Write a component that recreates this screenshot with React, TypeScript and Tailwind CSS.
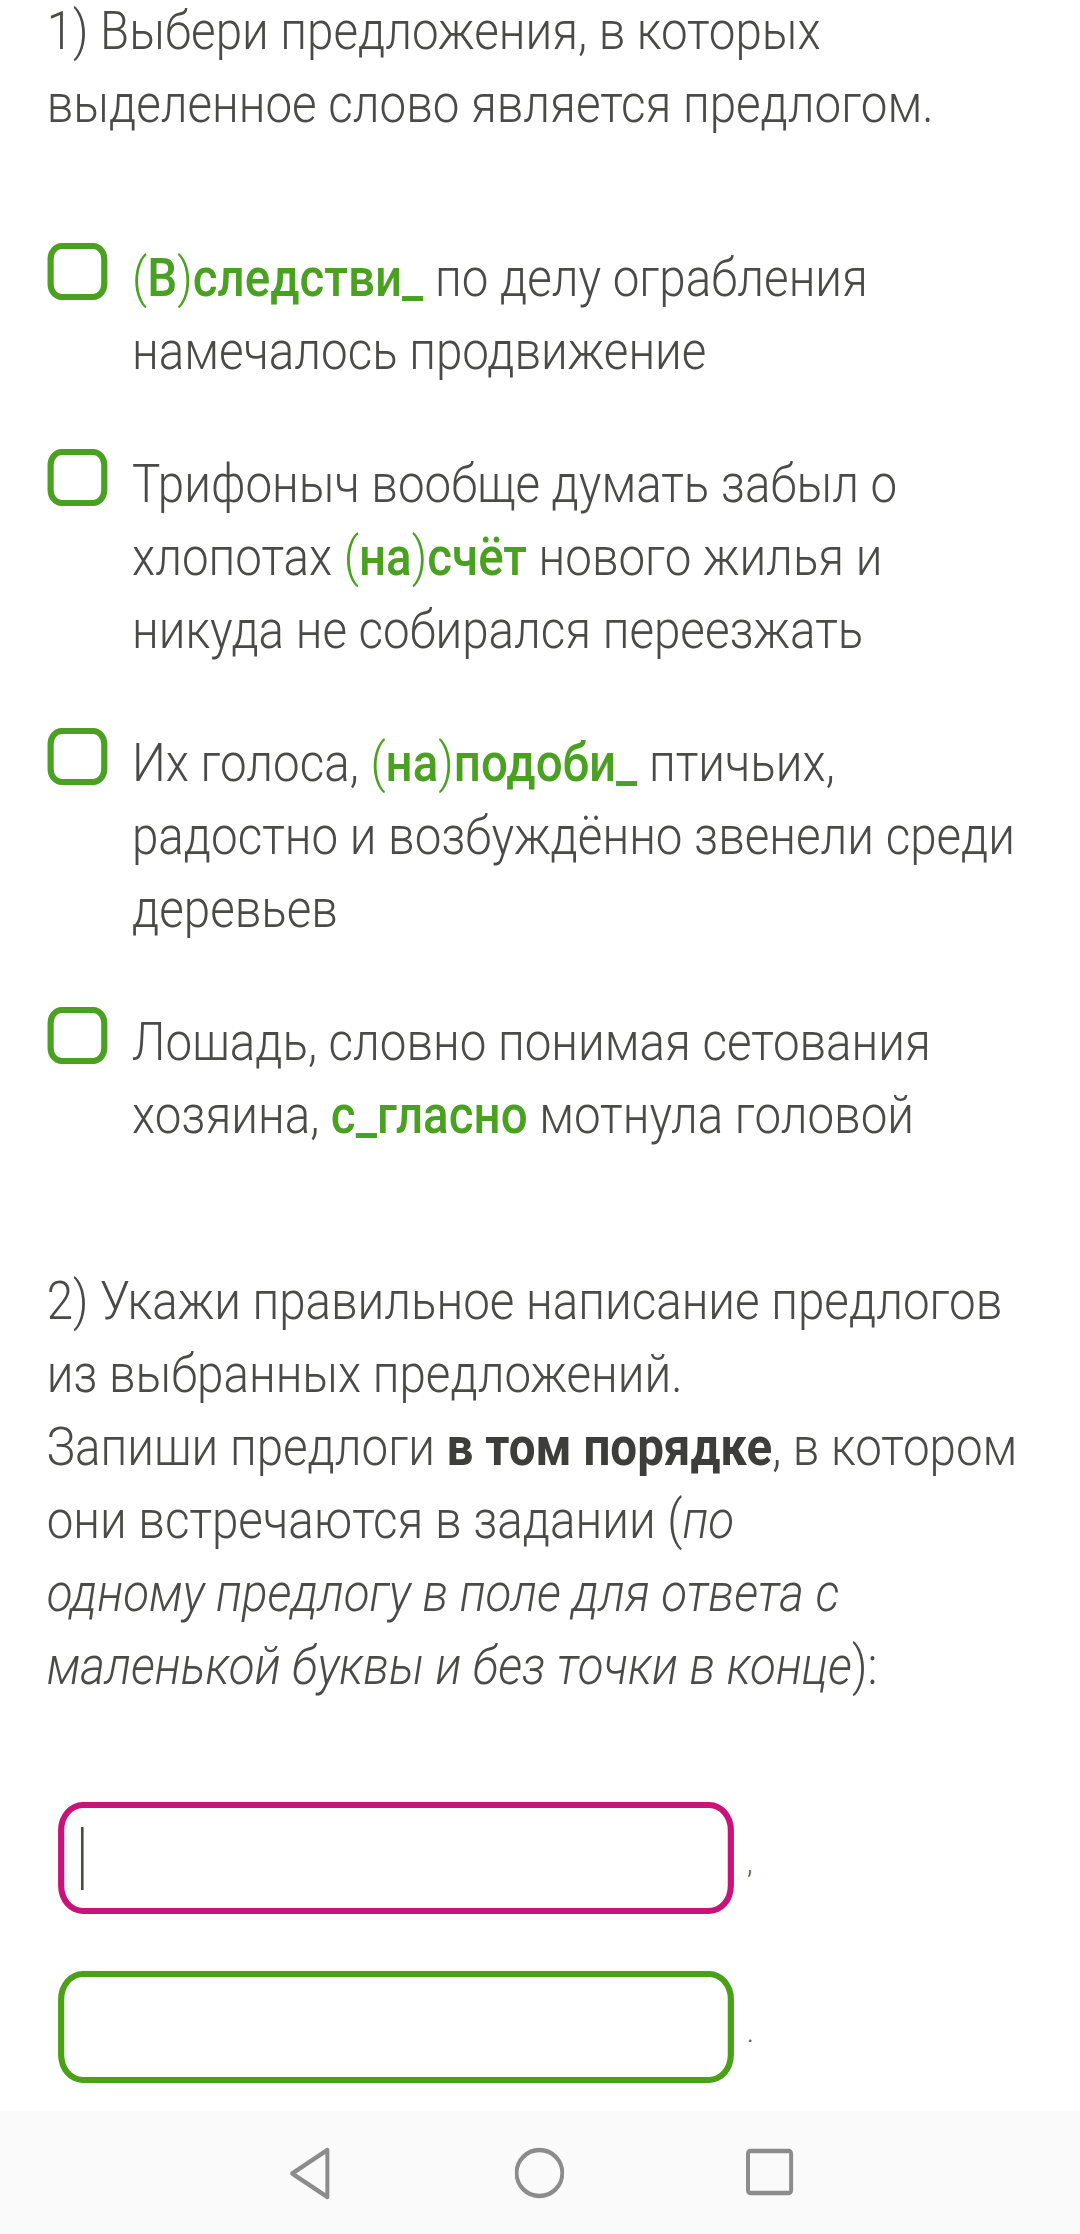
import { ReactNode } from "react";

// the capture is squeezed horizontally (round icons come out as ovals),
// so the page is laid out at 1227px and narrowed to 1080 with scale-x.
const font = { fontFamily: "Roboto, 'Noto Sans', sans-serif" };

function Hl({ pre, word }: { pre?: string; word: string }) {
  return (
    <span className="text-[#4aa021]">
      {pre ? (
        <>
          (<span className="font-medium">{pre}</span>)
        </>
      ) : null}
      <span className="font-medium">{word}</span>
    </span>
  );
}

function Option({ children }: { children: ReactNode }) {
  return (
    <div className="flex items-start">
      <span className="mt-[2px] ml-[1px] h-[57px] w-[68px] shrink-0 rounded-[16px] border-x-[7px] border-y-[6px] border-[#4aa021]" />
      <p className="ml-[28px]">{children}</p>
    </div>
  );
}

function AnswerField({ active, mark }: { active?: boolean; mark: string }) {
  return (
    <div className="flex items-end">
      <div
        className={
          active
            ? "ml-[13px] flex h-[112px] w-[768px] items-center rounded-[28px] border-x-[7px] border-y-[6px] border-[#c8137a] pl-[19px]"
            : "ml-[13px] flex h-[112px] w-[768px] items-center rounded-[28px] border-x-[7px] border-y-[6px] border-[#4aa017] pl-[19px]"
        }
      >
        {active ? <span className="h-[63px] w-[3px] bg-[#4b4b45]" /> : null}
      </div>
      <span className="ml-[15px] mb-[36px] text-[32px] leading-none text-[#555]">{mark}</span>
    </div>
  );
}

function NavBar() {
  return (
    <div className="mt-[28px] flex h-[125px] items-center gap-[206px] bg-[#fafafa] pl-[323px]">
      <svg width="56" height="56" viewBox="0 0 56 56" fill="none">
        <path d="M49 4 L49 51 L9 27.5 Z" stroke="#8c8c8c" strokeWidth="4.5" strokeLinejoin="round" />
      </svg>
      <svg width="56" height="56" viewBox="0 0 56 56" fill="none">
        <ellipse cx="28" cy="27" rx="26" ry="23" stroke="#8c8c8c" strokeWidth="4.5" />
      </svg>
      <svg width="56" height="56" viewBox="0 0 56 56" fill="none">
        <rect x="3" y="5" width="49" height="42" rx="2.5" stroke="#8c8c8c" strokeWidth="4.5" />
      </svg>
    </div>
  );
}

export default function App() {
  return (
    <div className="min-h-[2234px] w-[1080px] overflow-hidden bg-white">
      <div
        className="w-[1227px] origin-top-left scale-x-[0.88] text-[54px] font-light leading-[73px] text-[#4a4a48]"
        style={font}
      >
        <div className="px-[53px]">
          <p className="mt-[-6px]">
            1) Выбери предложения, в которых
            <br />
            выделенное слово является предлогом.
          </p>

          <div className="mt-[101px] flex flex-col gap-[60px]">
            <Option>
              <Hl pre="В" word="следстви_" /> по делу ограбления
              <br />
              намечалось продвижение
            </Option>
            <Option>
              Трифоныч вообще думать забыл о
              <br />
              хлопотах <Hl pre="на" word="счёт" /> нового жилья и
              <br />
              никуда не собирался переезжать
            </Option>
            <Option>
              Их голоса, <Hl pre="на" word="подоби_" /> птичьих,
              <br />
              радостно и возбуждённо звенели среди
              <br />
              деревьев
            </Option>
            <Option>
              Лошадь, словно понимая сетования
              <br />
              хозяина, <Hl word="с_гласно" /> мотнула головой
            </Option>
          </div>

          <p className="mt-[113px]">
            2) Укажи правильное написание предлогов
            <br />
            из выбранных предложений.
            <br />
            Запиши предлоги <span className="font-bold text-[#3d3d3b]">в том порядке</span>, в котором
            <br />
            они встречаются в задании (<i>по</i>
            <br />
            <i>одному предлогу в поле для ответа с</i>
            <br />
            <i>маленькой буквы и без точки в конце</i>):
          </p>

          <div className="mt-[100px] flex flex-col gap-[57px]">
            <AnswerField active mark="," />
            <AnswerField mark="." />
          </div>
        </div>
        <NavBar />
      </div>
    </div>
  );
}
